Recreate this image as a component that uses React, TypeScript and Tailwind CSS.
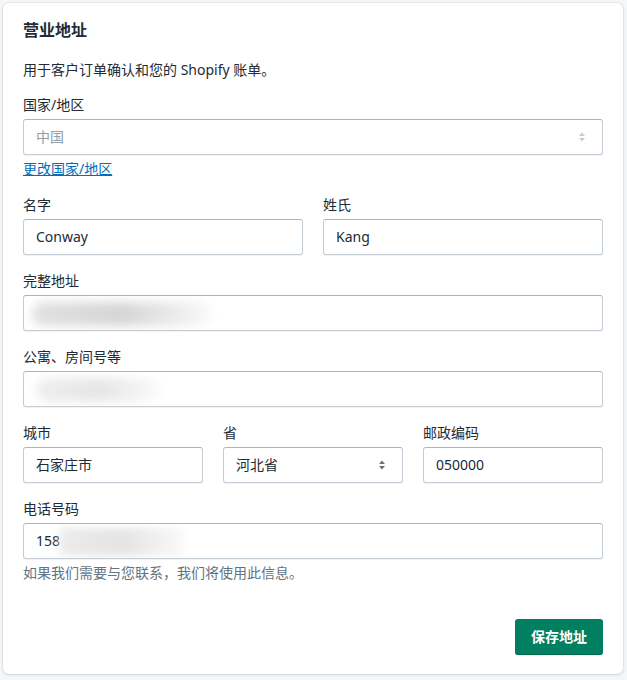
import { ReactNode } from 'react'

const font = { fontFamily: '"Noto Sans", "Noto Sans CJK SC", sans-serif' }

function Field({ label, children, className = '' }: { label: string; children: ReactNode; className?: string }) {
  return (
    <div className={className}>
      <label className="block text-sm leading-5 text-[#212b36] mb-1">{label}</label>
      {children}
    </div>
  )
}

function Box({ children, muted = false }: { children?: ReactNode; muted?: boolean }) {
  return (
    <div
      className={`relative h-9 rounded-[3px] border border-[#c4cdd5] border-t-[#aeb4b9] bg-white px-3 flex items-center text-sm shadow-[0_1px_0_rgba(22,29,37,0.05)] overflow-hidden ${
        muted ? 'text-[#919eab]' : 'text-[#212b36]'
      }`}
    >
      {children}
    </div>
  )
}

function Arrows({ light = false }: { light?: boolean }) {
  return (
    <svg width="8" height="12" viewBox="0 0 8 12" className="absolute right-4 top-1/2 -translate-y-1/2">
      <path d="M4 1.5 L7 5 H1 Z M4 10.5 L1 7 H7 Z" fill={light ? '#c4cdd5' : '#637381'} />
    </svg>
  )
}

export default function App() {
  return (
    <div className="min-h-[680px] bg-[#f4f6f8] p-[3px]" style={font}>
      <div className="w-[620px] h-[671px] bg-white rounded-md shadow-[0_0_0_1px_rgba(63,63,68,0.05),0_1px_3px_0_rgba(63,63,68,0.15)] px-5 pt-[15px]">
        <h2 className="text-base leading-6 font-semibold text-[#212b36]">营业地址</h2>
        <p className="mt-[18px] text-sm leading-5 text-[#212b36]">用于客户订单确认和您的 Shopify 账单。</p>

        <Field label="国家/地区" className="mt-[15px]">
          <Box muted>
            中国
            <Arrows light />
          </Box>
        </Field>
        <a href="#" className="block mt-1 text-sm leading-5 text-[#006fbb] underline w-fit">更改国家/地区</a>

        <div className="mt-4 grid grid-cols-2 gap-5">
          <Field label="名字">
            <Box>Conway</Box>
          </Field>
          <Field label="姓氏">
            <Box>Kang</Box>
          </Field>
        </div>

        <Field label="完整地址" className="mt-4">
          <Box>
            <div className="absolute left-2 top-1.5 h-6 w-[180px] rounded-full bg-gradient-to-r from-[#e2e2e2] via-[#d6d6d6] to-[#fafafa] blur-[5px]" />
          </Box>
        </Field>

        <Field label="公寓、房间号等" className="mt-4">
          <Box>
            <div className="absolute left-3 top-1.5 h-6 w-[125px] rounded-full bg-gradient-to-r from-[#efefef] via-[#e6e6e6] to-[#fbfbfb] blur-[5px]" />
          </Box>
        </Field>

        <div className="mt-4 grid grid-cols-3 gap-5">
          <Field label="城市">
            <Box>石家庄市</Box>
          </Field>
          <Field label="省">
            <Box>
              河北省
              <Arrows />
            </Box>
          </Field>
          <Field label="邮政编码">
            <Box>050000</Box>
          </Field>
        </div>

        <Field label="电话号码" className="mt-4">
          <Box>
            158
            <div className="absolute left-[36px] top-1 h-7 w-[125px] bg-gradient-to-r from-[#ececec] via-[#e4e4e4] to-[#fafafa] blur-[4px]" />
          </Box>
        </Field>
        <p className="mt-1 text-sm leading-5 text-[#637381]">如果我们需要与您联系，我们将使用此信息。</p>

        <div className="mt-9 flex justify-end">
          <button className="h-9 w-[88px] rounded-[3px] bg-[#008060] text-white text-sm font-semibold shadow-[0_1px_0_rgba(0,0,0,0.05),inset_0_-1px_0_rgba(0,0,0,0.2)]">
            保存地址
          </button>
        </div>
      </div>
    </div>
  )
}
